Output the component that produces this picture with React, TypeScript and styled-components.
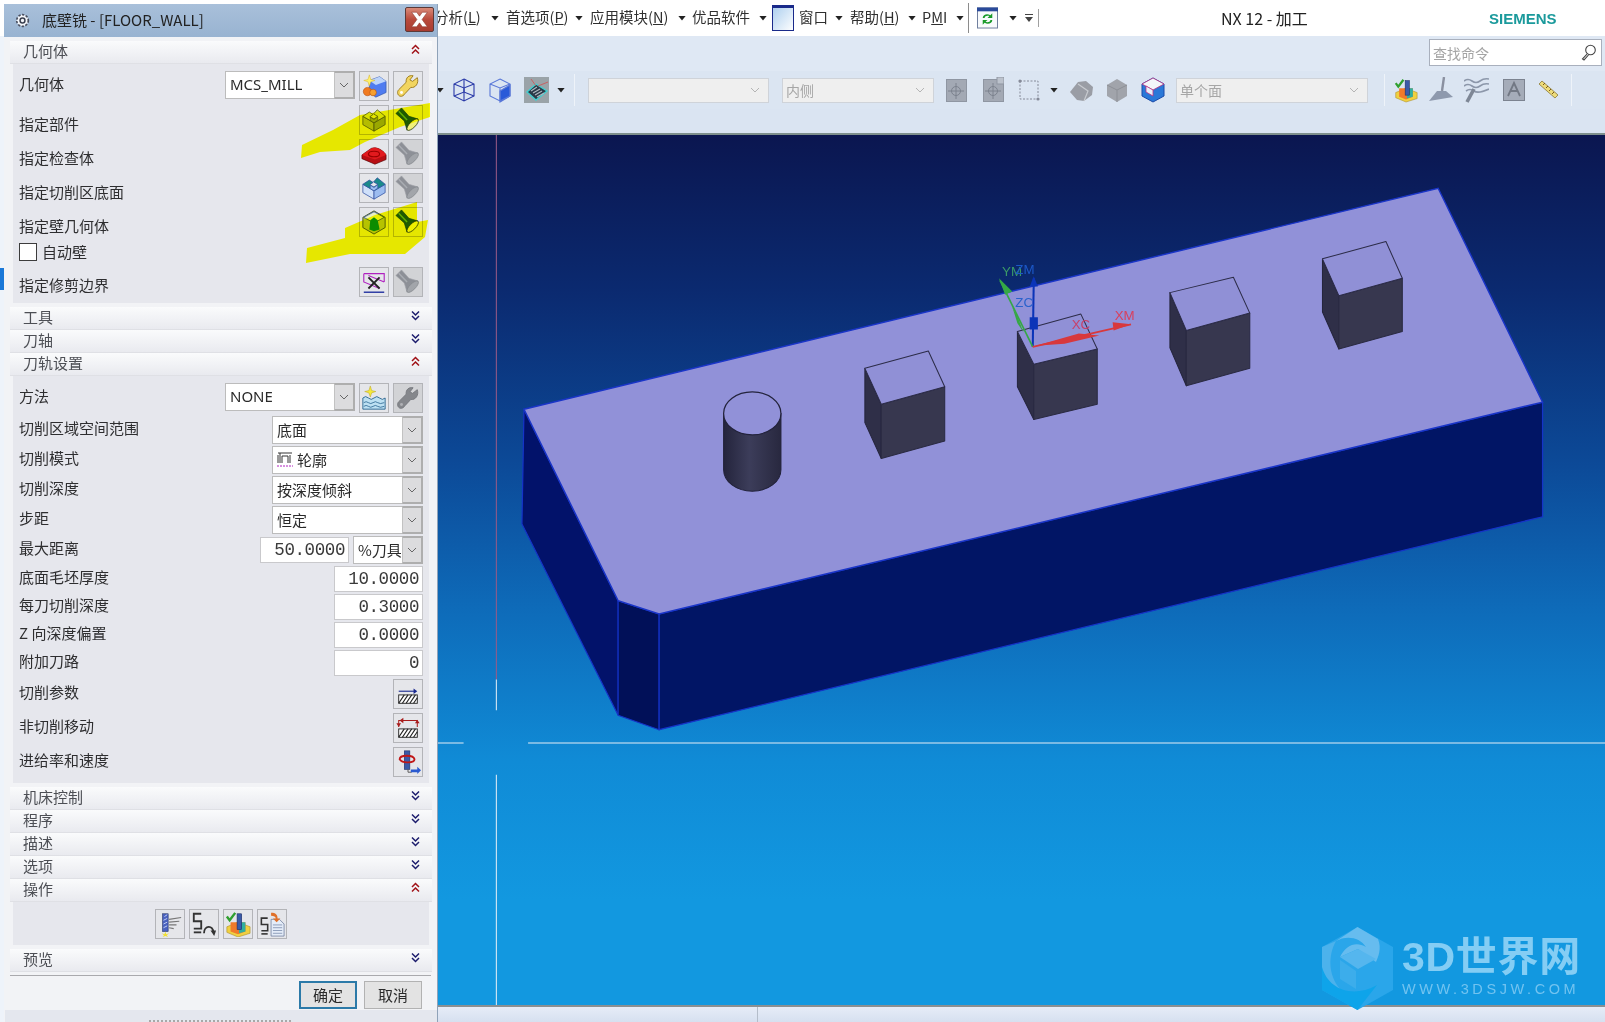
import React from 'react';
import styled, { createGlobalStyle } from 'styled-components';

const CJK = '"Noto Sans CJK SC", "Noto Sans", sans-serif';

const Global = createGlobalStyle`
  html, body { margin: 0; padding: 0; background: #fff; overflow: hidden; }
  body { font-family: ${CJK}; color: #333; }
  #root { width: 1605px; height: 1022px; }
`;

const Page = styled.div`
  position: relative; width: 1605px; height: 1022px; display: flex; flex-direction: column; overflow: hidden;
`;
const MenuBar = styled.div`
  height: 36px; background: #fff; display: flex; align-items: center; padding-left: 434px; flex: none;
`;
const MenuText = styled.span<{ $w: number; $ml: number }>`
  flex: none; width: ${p => p.$w}px; margin-left: ${p => p.$ml}px; font-size: 14.5px; line-height: 20px;
  white-space: nowrap; color: #2f2f2f; margin-top: -3px;
`;
const TitleText = styled(MenuText)`
  font-size: 16px; color: #222; margin-top: -1px;
`;
const Brand = styled(MenuText)`
  font-family: "Liberation Sans", sans-serif; font-weight: 700; font-size: 15px; color: #1b9a9c; margin-top: 1px;
`;
const Caret = styled.span<{ $ml: number }>`
  flex: none; width: 8px; height: 5px; margin-left: ${p => p.$ml}px; background: #222;
  clip-path: polygon(0 0, 100% 0, 50% 100%);
`;
const CaretBar = styled.span<{ $ml: number }>`
  flex: none; width: 8px; margin-left: ${p => p.$ml}px; display: flex; flex-direction: column; gap: 2px;
  &::before { content: ''; height: 1px; background: #444; }
  &::after { content: ''; height: 5px; background: #444; clip-path: polygon(0 0, 100% 0, 50% 100%); }
`;
const VSep = styled.span<{ $ml: number; $h: number; $c: string }>`
  flex: none; width: 1px; height: ${p => p.$h}px; margin-left: ${p => p.$ml}px; background: ${p => p.$c};
`;
const Slot = styled.span<{ $w: number; $ml: number }>`
  flex: none; width: ${p => p.$w}px; height: 26px; margin-left: ${p => p.$ml}px; display: flex; align-items: center;
  svg { width: 100%; height: 100%; display: block; }
`;
const Toolbar = styled.div`
  height: 97px; flex: none; background: #dde7f3; border-bottom: 2px solid #7e8f8c; display: flex; flex-direction: column;
`;
const SearchRow = styled.div`
  height: 35px; display: flex; justify-content: flex-end; padding: 3px 3px 0 0; box-sizing: border-box; background: #dfe8f4;
`;
const SearchBox = styled.div`
  width: 173px; height: 27px; box-sizing: border-box; border: 1px solid #a9b0bd; background: #fff; display: flex;
  align-items: center; justify-content: space-between; padding: 0 5px 0 3px; font-size: 14px; color: #a4a4a4;
`;
const ToolRow = styled.div`
  height: 38px; display: flex; align-items: center; padding-left: 436px; background: #dbe5f2;
`;
const ToolFill = styled.div`
  flex: 1; background: #dae4f2;
`;
const DisabledSelect = styled.div<{ $w: number; $ml: number }>`
  flex: none; width: ${p => p.$w}px; height: 25px; margin-left: ${p => p.$ml}px; box-sizing: border-box;
  border: 1px solid #cfd3d9; background: #efefef; display: flex; align-items: center; justify-content: space-between;
  padding: 0 8px 0 3px; font-size: 14px; color: #a6a6a6;
`;
const Graphic = styled.div`
  flex: 1; margin-left: 438px; position: relative; min-height: 0;
  background: linear-gradient(180deg, #0b1650 0%, #0b2a70 18%, #0c4a98 38%, #0e6cba 55%, #108bd6 72%, #1298e0 88%, #1298e0 100%);
  svg { display: block; width: 100%; height: 100%; }
`;
const StatusBar = styled.div`
  height: 17px; flex: none; background: linear-gradient(180deg, #e6ecf7, #d6e0f0); border-top: 2px solid #8a8f92; box-sizing: border-box;
  display: flex; padding-left: 757px;
  &::after { content: ''; width: 1px; background: #b4bdca; }
`;
const Rail = styled.div`
  position: absolute; left: 0; top: 36px; width: 438px; bottom: 0; background: #eef3fa;
`;
const RailMark = styled.span`
  position: absolute; left: 0; top: 232px; width: 4px; height: 22px; background: #1a78d8;
`;
const Watermark = styled.div`
  position: absolute; left: 884px; top: 792px; display: flex; align-items: flex-start; gap: 9px;
  svg { width: 71px; height: 83px; flex: none; }
`;
const MarkText = styled.div`
  display: flex; flex-direction: column; margin-top: 7px; font-family: "Liberation Sans", ${CJK}; color: #84cdf4;
`;
const MarkBig = styled.div`
  font-size: 41px; line-height: 47px; font-weight: 700; letter-spacing: .7px; white-space: nowrap;
`;
const MarkSmall = styled.div`
  font-size: 14.5px; line-height: 16px; letter-spacing: 3.6px; margin-top: 0; white-space: nowrap; color: #72c3f0;
`;

/* Dialog */
const Dialog = styled.div`
  position: absolute; left: 4px; top: 4px; width: 434px; height: 1018px; background: #f2f3f6; display: flex; flex-direction: column;
  border-right: 1px solid #8fa2b8; box-sizing: border-box;
`;
const TitleBar = styled.div`
  height: 33px; flex: none; background: linear-gradient(180deg, #a9c0da, #98b3d1); display: flex; align-items: center; padding: 0 3px 0 11px;
  font-size: 15px; color: #222;
`;
const TitleLabel = styled.span`
  margin-left: 12px; flex: 1; white-space: nowrap; margin-top: -2px;
`;
const Close = styled.button`
  width: 29px; height: 25px; padding: 0; border: 1px solid #5c3a38; border-radius: 2px; background: linear-gradient(180deg, #d98a78, #b94a3c 50%, #a83c30);
  display: flex; align-items: center; justify-content: center; margin-top: -2px;
`;
const Body = styled.div`
  flex: none; padding: 4px 5px 0 6px; display: flex; flex-direction: column;
`;
const SectionHead = styled.div`
  height: 23px; flex: none; box-sizing: border-box; display: flex; align-items: center; justify-content: space-between; padding: 0 12px 2px 13px;
  background: linear-gradient(180deg, #fafbfc, #e9eaef); border-bottom: 1px solid #dfe0e5; font-size: 15px; line-height: 20px; color: #4d4f55;
  svg { margin-bottom: 4px; }
`;
const Panel = styled.div`
  margin: 0 3px; background: #e6e7ed; padding: 7px 6px 6px; display: flex; flex-direction: column; flex: none;
`;
const Gap = styled.div<{ $h: number }>`
  height: ${p => p.$h}px; flex: none;
`;
const Row = styled.div<{ $h: number; $mt?: number }>`
  height: ${p => p.$h}px; margin-top: ${p => p.$mt ?? 0}px; display: flex; align-items: center; flex: none; gap: 4px;
`;
const Label = styled.span<{ $drop?: number }>`
  flex: 1; font-size: 15px; line-height: 20px; color: #2e2e30; white-space: nowrap; padding-top: ${p => p.$drop ?? 0}px; padding-bottom: 4px;
`;
const CheckLabel = styled.label`
  display: flex; align-items: center; gap: 5px; font-size: 15px; color: #2e2e30;
`;
const CheckText = styled.span`
  margin-top: -2px;
`;
const CheckBox = styled.span`
  width: 18px; height: 18px; box-sizing: border-box; border: 1px solid #3c3c3c; background: #fff; display: block;
`;
const IconBtn = styled.button<{ $off?: boolean }>`
  width: 30px; height: 30px; flex: none; padding: 0; box-sizing: border-box; border: 1px solid #b3b4b8; background: ${p => p.$off ? '#d2d3d6' : '#e5e6ea'};
  display: flex; align-items: center; justify-content: center; align-self: flex-start;
  svg { width: 26px; height: 26px; display: block; }
`;
const SelectBox = styled.div<{ $w: number; $h?: number }>`
  width: ${p => p.$w}px; height: ${p => p.$h ?? 28}px; flex: none; box-sizing: border-box; display: flex; background: #fff;
  border: 1px solid #bcbcbc; align-self: flex-start;
`;
const SelectValue = styled.span<{ $latin?: boolean }>`
  flex: 1; min-width: 0; display: flex; align-items: center; gap: 4px; padding-left: 4px; padding-bottom: 2px; font-size: 15px; color: #2a2a2a; white-space: nowrap;
  font-family: ${p => p.$latin ? '"Noto Sans", sans-serif' : CJK};
`;
const SelectArrow = styled.span`
  width: 21px; flex: none; background: #dcdcde; border: 2px solid #aeaeae; border-left: 1px solid #c2c2c2; box-sizing: border-box; margin: -1px -1px -1px 0;
  display: flex; align-items: center; justify-content: center;
`;
const NumField = styled.div<{ $w: number }>`
  width: ${p => p.$w}px; height: 26px; flex: none; box-sizing: border-box; border: 1px solid #c9c9cc; background: #fff; text-align: right;
  font-family: "Liberation Mono", monospace; font-size: 17.5px; line-height: 24px; letter-spacing: -.4px; padding-right: 3px; color: #3a3a3a; white-space: pre;
`;
const CenterRow = styled.div`
  display: flex; justify-content: center; gap: 4px;
`;
const Footer = styled.div`
  flex: none; margin: 3px 1px 0 0; border-top: 1px solid #a9a9ad; padding: 5px 9px 0 0; display: flex; justify-content: flex-end; gap: 7px; height: 35px; box-sizing: border-box;
`;
const DlgBtn = styled.button<{ $main?: boolean }>`
  width: 58px; height: 28px; box-sizing: border-box; padding: 0 0 2px; font-family: ${CJK}; font-size: 15px; color: #2a2a2a;
  background: #e3e3e3; border: ${p => p.$main ? '2px solid #2c7aa8' : '1px solid #b2b2b2'};
`;
const Grip = styled.div`
  flex: 1; background: #e4e7ee; display: flex; justify-content: center; align-items: flex-end; margin-left: 1px;
  &::after { content: ''; width: 144px; height: 2px; margin-bottom: 0; background: repeating-linear-gradient(90deg, #a8a8a8 0 2px, transparent 2px 4px); }
`;
const Marker = styled.svg`
  position: absolute; left: 0; top: 0; width: 438px; height: 300px; mix-blend-mode: multiply; pointer-events: none;
`;

/* Small icon parts */
const Chevs: React.FC<{ up?: boolean }> = ({ up }) => (
  <svg width="9" height="11" viewBox="0 0 9 11" fill="none" stroke={up ? '#a01218' : '#1c1c6c'} strokeWidth="1.5">
    {up ? <path d="M1 5 L4.5 1.5 L8 5 M1 9.5 L4.5 6 L8 9.5" /> : <path d="M1 1.5 L4.5 5 L8 1.5 M1 6 L4.5 9.5 L8 6" />}
  </svg>
);
const Vee = () => (
  <svg width="10" height="6" viewBox="0 0 10 6" fill="none" stroke="#666" strokeWidth="1"><path d="M1 1 L5 5 L9 1" /></svg>
);
const VeeLight = () => (
  <svg width="10" height="6" viewBox="0 0 10 6" fill="none" stroke="#b4b4b4" strokeWidth="1"><path d="M1 1 L5 5 L9 1" /></svg>
);
const Gear = () => (
  <svg width="15" height="15" viewBox="0 0 16 16"><circle cx="8" cy="8" r="6.2" fill="#f4f6fa" stroke="#4a5060" strokeWidth="1.8" strokeDasharray="2.4 1.6" /><circle cx="8" cy="8" r="2.6" fill="#f4f6fa" stroke="#3a4050" strokeWidth="1.6" /></svg>
);
const CloseX = () => (
  <svg width="19" height="17" viewBox="0 0 17 15"><path d="M1.5 1 L6 1 L8.5 4.5 L11 1 L15.5 1 L10.8 7.5 L15.5 14 L11 14 L8.5 10.5 L6 14 L1.5 14 L6.2 7.5 Z" fill="#fff" stroke="#8a3a30" strokeWidth=".5" /></svg>
);
const Flash: React.FC<{ off?: boolean }> = ({ off }) => (
  <svg viewBox="0 0 28 28">
    <path d="M1 7 L7 1 L15 10 L25 13 L13 25 L10 15 Z" fill={off ? '#8d9097' : '#1e5a14'} stroke={off ? '#a0a3a8' : '#123a0c'} strokeWidth=".7" />
    <path d="M4 4.5 L13 14" stroke={off ? '#a9acb2' : '#5fae3c'} strokeWidth="1.6" />
    <ellipse cx="19" cy="19" rx="8.2" ry="3.2" transform="rotate(-45 19 19)" fill={off ? '#a2a5aa' : '#f0f07a'} stroke={off ? '#85888e' : '#20300c'} strokeWidth=".8" />
  </svg>
);
const Wrench: React.FC<{ off?: boolean }> = ({ off }) => (
  <svg viewBox="0 0 28 28">
    <path d="M24 5 L19 9 L16 7.5 L19.5 3 C15 2 11.5 5 12 10 L4 18 C2 20 2.5 24 5.5 25 C8 25.5 9.5 24 11 22 L17 15.5 C22 16.5 26 11 24 5 Z" fill={off ? '#85878c' : '#f2d560'} stroke={off ? '#77797e' : '#9b7a1c'} strokeWidth="1" />
    <circle cx="7" cy="21" r="1.6" fill={off ? '#b0b1b5' : '#fff'} />
  </svg>
);
const SlotBlock: React.FC<{ top: string; left: string; right: string; edge: string }> = ({ top, left, right, edge }) => (
  <svg viewBox="0 0 28 28">
    <path d="M2 10 L14 17 L14 26 L2 19 Z" fill={left} stroke={edge} strokeWidth=".8" />
    <path d="M14 17 L26 10 L26 19 L14 26 Z" fill={right} stroke={edge} strokeWidth=".8" />
    <path d="M2 10 L9 5.5 L13 8 L9.5 10.5 L14 13 L18 10 L13.5 7.5 L17.5 3 L26 10 L14 17 Z" fill={top} stroke={edge} strokeWidth=".8" />
    <path d="M10 11 L14 13.5 L18 10.5 L18 14 L14 17 L10 14.5 Z" fill={right} stroke={edge} strokeWidth=".6" />
  </svg>
);
const NewGeom = () => (
  <svg viewBox="0 0 28 28">
    <path d="M9 8 L20 4 L27 9 L27 21 L16 26 L9 21 Z" fill="#4f7cf0" stroke="#3255a8" strokeWidth=".7" />
    <path d="M9 8 L20 4 L27 9 L16 13 Z" fill="#bcd4fa" />
    <path d="M9 2 L10.5 7 L15 8 L10.5 9.5 L9 14 L7.5 9.5 L3 8 L7.5 7 Z" fill="#fff26a" stroke="#d8b020" strokeWidth=".5" />
    <circle cx="7" cy="20" r="4.5" fill="#f07a20" stroke="#b04a10" strokeWidth=".6" /><circle cx="13" cy="21" r="3.6" fill="#f6a030" stroke="#b04a10" strokeWidth=".6" />
  </svg>
);
const RedBody = () => (
  <svg viewBox="0 0 28 28">
    <path d="M1 15 L11 8 C16 6 23 9 27 15 L27 20 L15 25 L1 19 Z" fill="#b80f14" stroke="#500" strokeWidth=".7" />
    <path d="M1 15 L11 8 C16 6 23 9 27 15 L15 20 Z" fill="#e21a1e" />
    <ellipse cx="14" cy="14" rx="6" ry="3" fill="none" stroke="#900" strokeWidth="1.2" />
  </svg>
);
const WallBlock = () => (
  <svg viewBox="0 0 28 28">
    <path d="M14 2 L26 9 L26 20 L14 27 L2 20 L2 9 Z" fill="#b6c23a" stroke="#2a3a10" strokeWidth=".8" />
    <path d="M14 3 L25 9 L14 15 L3 9 Z" fill="#e8efc0" stroke="#3050b0" strokeWidth=".8" />
    <path d="M9 22 L10 12 L14 9 L18 12 L20 22 L14 24 Z" fill="#0c8c28" />
  </svg>
);
const Trim = () => (
  <svg viewBox="0 0 28 28" fill="none">
    <path d="M3 5 L25 5 L25 14 M3 5 L3 14 L20 21 M25 14 L8 7" stroke="#b022c0" strokeWidth="1.2" />
    <path d="M3 25 L25 25" stroke="#2030a0" strokeWidth="1.5" />
    <path d="M8 9 L20 21 M20 9 L8 21" stroke="#222" strokeWidth="2" />
  </svg>
);
const NewMethod = () => (
  <svg viewBox="0 0 28 28">
    <path d="M10 1 L11.5 6 L16 7 L11.5 8.5 L10 13 L8.5 8.5 L4 7 L8.5 6 Z" fill="#f5ea3a" stroke="#b8a020" strokeWidth=".5" />
    <path d="M2 14 Q5 11 8 14 T14 14 T20 14 T26 14 L26 26 L2 26 Z" fill="#bde0f2" stroke="#1c5a88" strokeWidth=".9" />
    <path d="M3 19 Q5.5 17 8 19 T13 19 T18 19 T25 19 M3 23 Q5.5 21 8 23 T13 23 T18 23 T25 23" fill="none" stroke="#1c5a88" strokeWidth=".8" />
  </svg>
);
const Hatch: React.FC = () => (
  <g>
    <rect x="4" y="15" width="20" height="9" fill="#fff" stroke="#222" strokeWidth="1" />
    <path d="M4 24 L10 15 M8 24 L14 15 M12 24 L18 15 M16 24 L22 15 M20 24 L24 18" stroke="#222" strokeWidth="1.2" />
  </g>
);
const CutParam = () => (
  <svg viewBox="0 0 28 28"><Hatch /><path d="M4 11 L22 11" stroke="#1a2a90" strokeWidth="1.2" /><path d="M20 8 L24 11 L20 14 Z" fill="#1a2a90" /></svg>
);
const NonCut = () => (
  <svg viewBox="0 0 28 28"><Hatch /><path d="M4 13 L4 6 L24 6 L24 13" fill="none" stroke="#a81c1c" strokeWidth="1.1" /><path d="M1.5 9 L6.5 9 L4 13 Z M21.5 9 L26.5 9 L24 5 Z M9 3 L9 9 L5 6 Z" fill="#a81c1c" /></svg>
);
const Feeds = () => (
  <svg viewBox="0 0 28 28">
    <rect x="10" y="2" width="6" height="20" fill="#3a5aa8" stroke="#1a2a60" strokeWidth=".6" />
    <path d="M5 11 C5 6 20 6 21 11 C21 15 8 16 5 11 Z" fill="none" stroke="#c01818" strokeWidth="2" />
    <path d="M14 22 L14 25 L18 25" stroke="#555" fill="none" /><path d="M17 22 L24 22 L24 19 L28 23 L24 27 L24 25 L17 25 Z" fill="#2a5ad0" />
  </svg>
);
const Gen = () => (
  <svg viewBox="0 0 28 28">
    <rect x="6" y="3" width="6" height="19" fill="#4a62c0" stroke="#1a2a60" strokeWidth=".6" />
    <path d="M8 6 L11 4 M7 10 L11 8 M7 14 L11 12 M7 18 L11 16" stroke="#c8d4f4" strokeWidth="1" />
    <path d="M13 9 L26 7 M13 12 L24 11 M13 15 L21 15 M13 18 L18 19" stroke="#777" strokeWidth="1.2" />
    <path d="M9 22 L10 25 L13 24 L10.5 26 L12 28 L9 27 L6 28 L7.5 26 L5 24 L8 25 Z" fill="#f0e030" />
  </svg>
);
const Snake = () => <path d="M11 3 L3 3 L3 11 L11 11 L11 19 L3 19" fill="none" stroke="#333" strokeWidth="2" />;
const Replay = () => (
  <svg viewBox="0 0 28 28"><Snake /><path d="M3 23 L11 23" stroke="#333" strokeWidth="2" /><path d="M14 24 C14 15 24 15 24 23" fill="none" stroke="#333" strokeWidth="2" /><path d="M21 21 L27 21 L25 27 Z" fill="#333" /></svg>
);
const Verify = () => (
  <svg viewBox="0 0 28 28">
    <path d="M2 17 L14 12 L27 17 L27 24 L14 28 L2 23 Z" fill="#f0d040" stroke="#a88a20" strokeWidth=".6" />
    <path d="M6 12 L22 12 L22 22 L14 25 L6 22 Z" fill="#f07a2a" /><path d="M15 12 L22 12 L22 22 L15 24 Z" fill="#30b0a0" />
    <rect x="13" y="3" width="5" height="17" fill="#3a5aa8" stroke="#1a2a60" strokeWidth=".6" />
    <path d="M2 6 L5 10 L11 2" fill="none" stroke="#30a030" strokeWidth="2.6" />
  </svg>
);
const Listing = () => (
  <svg viewBox="0 0 28 28"><g transform="scale(.85) translate(0 6)"><Snake /><path d="M3 23 L11 23" stroke="#333" strokeWidth="2" /></g>
    <path d="M13 9 L22 9 L27 14 L27 27 L13 27 Z" fill="#e4ecf8" stroke="#6a7a9a" strokeWidth=".8" />
    <path d="M15 15 L25 15 M15 18 L25 18 M15 21 L25 21 M15 24 L25 24" stroke="#8a9ab8" strokeWidth="1" />
    <path d="M13 2 C18 2 20 4 20 8 L23 8 L19 12 L15 8 L18 8 C18 6 16 5 13 5 Z" fill="#e0702a" />
  </svg>
);
const ModeIcon = () => (
  <svg width="16" height="16" viewBox="0 0 16 16" fill="none">
    <path d="M1 2 L15 2 M3 2 L3 12 M1 12 L1 4 M5 12 L5 5 L11 5 L11 12 M13 12 L13 4" stroke="#333" strokeWidth="1" />
    <path d="M0 15 L16 15" stroke="#b022c0" strokeWidth="1" strokeDasharray="2 1" />
  </svg>
);
const WinIcon = () => (
  <svg viewBox="0 0 22 26" preserveAspectRatio="none">
    <defs><linearGradient id="wg" x1="0" y1="0" x2="1" y2="1"><stop offset="0" stopColor="#a9cdee" /><stop offset="1" stopColor="#fff" /></linearGradient></defs>
    <rect x=".5" y=".5" width="21" height="25" fill="url(#wg)" stroke="#1a2a8a" /><rect x="0" y="0" width="22" height="3" fill="#1a2a8a" />
  </svg>
);
const Refresh = () => (
  <svg viewBox="0 0 22 22">
    <rect x=".5" y=".5" width="21" height="21" fill="#f8fafc" stroke="#6a7a9a" /><rect x="0" y="0" width="22" height="4" fill="#2a4a9a" />
    <path d="M6 11 C6 7 11 6 14 8 L16 6 L16 11 L11 11 L13 9 C11 8 8 9 8 11 Z M16 13 C16 17 11 18 8 16 L6 18 L6 13 L11 13 L9 15 C11 16 14 15 14 13 Z" fill="#1a9a2a" />
  </svg>
);
const Wire: React.FC<{ solid?: boolean }> = ({ solid }) => (
  <svg viewBox="0 0 24 26" fill="none" stroke={solid ? '#5a78d8' : '#2a3aa8'} strokeWidth="1.1">
    {solid && <path d="M12 14 L22 8 L22 19 L12 25 Z" fill="#2a5ad8" />}
    <path d="M12 2 L22 7 L22 19 L12 24 L2 19 L2 7 Z M2 7 L12 11 L22 7 M12 11 L12 24" />
    {!solid && <path d="M12 2 L12 15 M2 19 L12 15 L22 19" />}
  </svg>
);
const Chip = () => (
  <svg viewBox="0 0 25 26">
    <rect x="0" y="0" width="25" height="26" fill="#9aa3a8" />
    <path d="M12 7 L23 14 L12 23 L3 15 Z" fill="#2a3a48" stroke="#42d0d0" strokeWidth="1.4" />
    <path d="M7 14 L13 10 M9 16 L16 12 M11 18 L18 14 M13 20 L20 16" stroke="#aeb8c0" strokeWidth="1.2" />
    <path d="M7 2 L12 9 M14 9 L24 5" stroke="#d05050" strokeWidth=".8" />
  </svg>
);
const Target: React.FC<{ badge?: boolean }> = ({ badge }) => (
  <svg viewBox="0 0 21 26">
    <rect x=".5" y="2.5" width="20" height="22" fill="#a3a9b4" stroke="#8f96a2" />
    <circle cx="10" cy="14" r="4.5" fill="none" stroke="#7c828e" /><path d="M10 6 L10 22 M2 14 L18 14" stroke="#7c828e" />
    {badge && <rect x="14" y="0" width="7" height="7" fill="#bcc2cc" stroke="#8f96a2" />}
  </svg>
);
const DashBox = () => (
  <svg viewBox="0 0 22 26"><rect x="2" y="4" width="18" height="18" fill="none" stroke="#858a98" strokeDasharray="2 1.5" /><circle cx="2" cy="4" r="1.6" fill="#858a98" /><circle cx="20" cy="22" r="1.6" fill="#858a98" /></svg>
);
const GreyShape = () => (
  <svg viewBox="0 0 24 26"><path d="M1 15 L9 5 L17 4 L24 10 L23 18 L15 24 L8 23 Z" fill="#9a9da5" /><path d="M9 7 L19 14 L15 24" fill="none" stroke="#c8cbd0" strokeWidth="1.2" /></svg>
);
const GreyCube = () => (
  <svg viewBox="0 0 22 26"><path d="M11 2 L21 8 L21 19 L11 25 L1 19 L1 8 Z" fill="#a1a4ab" /><path d="M1 8 L11 13 L21 8 M11 13 L11 25" stroke="#8d9097" fill="none" /></svg>
);
const ColorCube = () => (
  <svg viewBox="0 0 24 26">
    <path d="M12 1 L23 7 L23 19 L12 25 L1 19 L1 7 Z" fill="#2a78d8" stroke="#1a4aa8" />
    <path d="M12 1 L23 7 L12 13 L1 7 Z" fill="#f4f6fa" stroke="#b03080" strokeWidth=".8" />
    <path d="M5 9 L12 13 L12 19 L5 15 Z" fill="#e8f0fa" stroke="#c03080" strokeWidth=".8" />
  </svg>
);
const Broom = () => (
  <svg viewBox="0 0 24 26"><path d="M15 0 L13 14" stroke="#8a90a0" strokeWidth="2.4" /><path d="M8 14 L17 14 L24 20 L0 24 Z" fill="#8e99ad" /></svg>
);
const Waves = () => (
  <svg viewBox="0 0 25 26" fill="none" stroke="#8c97aa" strokeWidth="1.6"><path d="M0 4 Q4 1 8 4 T16 4 T25 2 M0 9 Q4 6 8 9 T16 9 T25 7 M2 14 Q6 11 10 14 T25 12" /><path d="M10 12 L3 25" strokeWidth="3.6" stroke="#7e8796" /></svg>
);
const LetterBox = () => (
  <svg viewBox="0 0 22 26">
    <rect x=".5" y="2.5" width="21" height="21" fill="#a5acb9" stroke="#7c8390" />
    <path d="M5 19 L11 6 L17 19 M7.5 14 L14.5 14" fill="none" stroke="#727884" strokeWidth="1.8" />
  </svg>
);
const Ruler = () => (
  <svg viewBox="0 0 21 26"><path d="M1 7 L4 4 L20 18 L17 21 Z" fill="#eedc7a" stroke="#8a7a38" strokeWidth=".8" /><path d="M5 8 L7 6 M8 11 L10 9 M11 14 L13 12 M14 17 L16 15" stroke="#7a5a18" strokeWidth="1" /></svg>
);
const Lens = () => (
  <svg width="15" height="17" viewBox="0 0 15 17" fill="none" stroke="#444" strokeWidth="1.1"><circle cx="9.5" cy="6" r="4.8" /><path d="M6 10 L1.5 15 L3 16 L7.5 11" fill="#ddd" /></svg>
);

/* Viewport drawing, in the coordinates of the picture */
const Box: React.FC<{ p: number[] }> = ({ p }) => {
  const [ax, ay, bx, by, cx, cy, dx, dy, h] = p;
  return (
    <g strokeWidth="1" strokeLinejoin="round">
      <polygon points={`${ax},${ay} ${dx},${dy} ${dx},${dy + h} ${ax},${ay + h}`} fill="#2f2f48" stroke="#24243c" />
      <polygon points={`${dx},${dy} ${cx},${cy} ${cx},${cy + h} ${dx},${dy + h}`} fill="#37374f" stroke="#2a2a42" />
      <polygon points={`${ax},${ay} ${bx},${by} ${cx},${cy} ${dx},${dy}`} fill="#9090d6" stroke="#2c2c48" />
    </g>
  );
};

const Scene = () => (
  <svg viewBox="428 132 1140 850" preserveAspectRatio="none">
    <defs>
      <linearGradient id="cyl" x1="0" y1="0" x2="1" y2="0">
        <stop offset="0" stopColor="#24243c" /><stop offset=".45" stopColor="#3c3d5a" /><stop offset="1" stopColor="#28283f" />
      </linearGradient>
    </defs>
    <polygon points="512,400 604,587 604,699 510,512" fill="#02126a" stroke="#1533c8" strokeWidth="1.2" />
    <polygon points="604,587 644,600 644,713 604,699" fill="#011058" stroke="#1533c8" strokeWidth="1" />
    <polygon points="644,600 1507,393 1507,505 644,713" fill="#011565" stroke="#1533c8" strokeWidth="1.2" />
    <polygon points="512,400 1405,184 1507,393 644,600 604,587" fill="#9191d8" stroke="#1a35c8" strokeWidth="1.4" />
    <path d="M707 404 L707 459 A28 21 0 0 0 763 459 L763 404 Z" fill="url(#cyl)" stroke="#22223a" />
    <ellipse cx="735" cy="404" rx="28" ry="21" fill="#9191d8" stroke="#23233c" strokeWidth="1.2" />
    <Box p={[845, 360, 907, 343, 923, 378, 861, 395, 53]} />
    <Box p={[994, 324, 1056, 307, 1072, 341, 1010, 356, 54]} />
    <Box p={[1143, 286, 1205, 271, 1221, 306, 1159, 323, 54]} />
    <Box p={[1292, 253, 1354, 236, 1370, 272, 1308, 289, 52]} />
    <path d="M1009 339 L1010 272" stroke="#0b34b8" strokeWidth="2" />
    <path d="M1010 270 L1006 280 L1014 280 Z M1006 310 L1014 310 L1014 322 L1006 322 Z" fill="#0b34b8" />
    <path d="M1009 339 L977 274" stroke="#35a845" strokeWidth="1.6" />
    <path d="M976 272 L989 285 L982 288 Z M989 300 L994 309 L1000 325 L994 316 Z" fill="#35a845" />
    <path d="M1009 339 L1105 317" stroke="#d8383c" strokeWidth="1.6" />
    <path d="M1105 317 L1087 315 L1088 323 Z M1012 338 L1054 326 L1074 328 L1040 336 Z" fill="#d8383c" />
    <g fontFamily='"Liberation Sans", sans-serif' fontSize="13">
      <text x="979" y="270" fill="#3a9a68">YM</text>
      <text x="992" y="268" fill="#1c58c8">ZM</text>
      <text x="992" y="300" fill="#2a62cc">ZC</text>
      <text x="1047" y="322" fill="#c8406a">XC</text>
      <text x="1089" y="313" fill="#d8405e">XM</text>
    </g>
    <path d="M485 132 L485 664" stroke="#9a5a88" strokeWidth="1" />
    <path d="M485 664 L485 694 M485 757 L485 982 M428 726 L453 726 M516 726 L1568 726" stroke="#e4eef6" strokeWidth="1" />
  </svg>
);

const MarkLogo = () => (
  <svg viewBox="0 0 71 83">
    <polygon points="35.5,0 71,20 71,63 35.5,83 0,63 0,20" fill="#2aa6ea" />
    <path d="M35.5 0 L56 12 C60 22 56 30 54 35 L36 22 L18 30 C24 18 34 14 44 20 C38 10 24 8 14 14 Z" fill="#66bcef" />
    <path d="M14 14 C6 28 6 48 18 62 L0 63 L0 20 Z" fill="#4cb2ec" />
    <path d="M18 30 L36 22 L54 32 L36 42 Z" fill="#55b6ee" />
    <path d="M18 33 L34 44 L34 62 L18 52 Z" fill="#3cadeb" />
    <path d="M0 40 C6 62 30 72 55 58 L35.5 83 L0 63 Z" fill="#0ea4ea" />
  </svg>
);

const Section: React.FC<{ title: string; up?: boolean }> = ({ title, up }) => (
  <SectionHead><span>{title}</span><Chevs up={up} /></SectionHead>
);
const Sel: React.FC<{ w: number; value: string; latin?: boolean; icon?: React.ReactNode }> = ({ w, value, latin, icon }) => (
  <SelectBox $w={w}><SelectValue $latin={latin}>{icon}{value}</SelectValue><SelectArrow><Vee /></SelectArrow></SelectBox>
);

type M = { k: 't'; s: React.ReactNode; w: number; ml: number } | { k: 'c' | 'b'; ml: number } | { k: 'i'; n: React.ReactNode; w: number; ml: number } | { k: 's'; ml: number; h: number; c: string };
const menu: M[] = [
  { k: 't', s: <>分析(<u>L</u>)</>, w: 44, ml: 0 }, { k: 'c', ml: 13 },
  { k: 't', s: <>首选项(<u>P</u>)</>, w: 63, ml: 7 }, { k: 'c', ml: 6 },
  { k: 't', s: <>应用模块(<u>N</u>)</>, w: 81, ml: 7 }, { k: 'c', ml: 7 },
  { k: 't', s: '优品软件', w: 60, ml: 6 }, { k: 'c', ml: 7 },
  { k: 'i', n: <WinIcon />, w: 22, ml: 5 },
  { k: 't', s: '窗口', w: 30, ml: 5 }, { k: 'c', ml: 6 },
  { k: 't', s: <>帮助(<u>H</u>)</>, w: 52, ml: 7 }, { k: 'c', ml: 6 },
  { k: 't', s: <>P<u>M</u>I</>, w: 28, ml: 6 }, { k: 'c', ml: 6 },
  { k: 's', ml: 4, h: 30, c: '#8c8c8c' },
  { k: 'i', n: <Refresh />, w: 21, ml: 8 }, { k: 'c', ml: 11 }, { k: 'b', ml: 8 },
  { k: 's', ml: 5, h: 18, c: '#a0a0a0' },
];
const renderMenu = (m: M, i: number) => {
  if (m.k === 't') return <MenuText key={i} $w={m.w} $ml={m.ml}>{m.s}</MenuText>;
  if (m.k === 'c') return <Caret key={i} $ml={m.ml} />;
  if (m.k === 'b') return <CaretBar key={i} $ml={m.ml} />;
  if (m.k === 'i') return <Slot key={i} $w={m.w} $ml={m.ml}>{m.n}</Slot>;
  return <VSep key={i} $ml={m.ml} $h={m.h} $c={m.c} />;
};

export default function App() {
  return (
    <Page>
      <Global />
      <MenuBar>
        {menu.map(renderMenu)}
        <TitleText $w={88} $ml={182}>NX 12 - 加工</TitleText>
        <Brand $w={69} $ml={180}>SIEMENS</Brand>
      </MenuBar>
      <Toolbar>
        <SearchRow><SearchBox>查找命令<Lens /></SearchBox></SearchRow>
        <ToolRow>
          <Caret $ml={0} />
          <Slot $w={24} $ml={8}><Wire /></Slot>
          <Slot $w={24} $ml={12}><Wire solid /></Slot>
          <Slot $w={25} $ml={12}><Chip /></Slot>
          <Caret $ml={8} />
          <VSep $ml={9} $h={32} $c="#eef3f9" />
          <DisabledSelect $w={181} $ml={13}><span /><VeeLight /></DisabledSelect>
          <DisabledSelect $w={152} $ml={13}>内侧<VeeLight /></DisabledSelect>
          <Slot $w={21} $ml={12}><Target /></Slot>
          <Slot $w={21} $ml={16}><Target badge /></Slot>
          <Slot $w={22} $ml={14}><DashBox /></Slot>
          <Caret $ml={10} />
          <Slot $w={24} $ml={11}><GreyShape /></Slot>
          <Slot $w={22} $ml={13}><GreyCube /></Slot>
          <Slot $w={24} $ml={13}><ColorCube /></Slot>
          <DisabledSelect $w={192} $ml={11}>单个面<VeeLight /></DisabledSelect>
          <VSep $ml={16} $h={32} $c="#eef3f9" />
          <Slot $w={24} $ml={9}><Verify /></Slot>
          <Slot $w={24} $ml={11}><Broom /></Slot>
          <Slot $w={25} $ml={11}><Waves /></Slot>
          <Slot $w={22} $ml={14}><LetterBox /></Slot>
          <Slot $w={21} $ml={13}><Ruler /></Slot>
          <VSep $ml={12} $h={32} $c="#eef3f9" />
        </ToolRow>
        <ToolFill />
      </Toolbar>
      <Graphic>
        <Scene />
        <Watermark>
          <MarkLogo />
          <MarkText>
            <MarkBig>3D世界网</MarkBig>
            <MarkSmall>WWW.3DSJW.COM</MarkSmall>
          </MarkText>
        </Watermark>
      </Graphic>
      <StatusBar />
      <Rail><RailMark /></Rail>
      <Dialog>
        <TitleBar>
          <Gear />
          <TitleLabel>底壁铣 - [FLOOR_WALL]</TitleLabel>
          <Close aria-label="关闭"><CloseX /></Close>
        </TitleBar>
        <Body>
          <Section title="几何体" up />
          <Panel>
            <Row $h={30}><Label>几何体</Label><Sel w={130} value="MCS_MILL" latin /><IconBtn><NewGeom /></IconBtn><IconBtn><Wrench /></IconBtn></Row>
            <Row $h={30} $mt={4}><Label $drop={12}>指定部件</Label><IconBtn><SlotBlock top="#d8e038" left="#b4bc20" right="#9aa818" edge="#4a5208" /></IconBtn><IconBtn><Flash /></IconBtn></Row>
            <Row $h={30} $mt={4}><Label $drop={12}>指定检查体</Label><IconBtn><RedBody /></IconBtn><IconBtn $off><Flash off /></IconBtn></Row>
            <Row $h={30} $mt={4}><Label $drop={12}>指定切削区底面</Label><IconBtn><SlotBlock top="#1a8a8a" left="#cfe0fa" right="#9cbcf0" edge="#3050a0" /></IconBtn><IconBtn $off><Flash off /></IconBtn></Row>
            <Row $h={30} $mt={4}><Label $drop={12}>指定壁几何体</Label><IconBtn><WallBlock /></IconBtn><IconBtn><Flash /></IconBtn></Row>
            <Row $h={18} $mt={6}><CheckLabel><CheckBox /><CheckText>自动壁</CheckText></CheckLabel></Row>
            <Row $h={30} $mt={6}><Label $drop={10}>指定修剪边界</Label><IconBtn><Trim /></IconBtn><IconBtn $off><Flash off /></IconBtn></Row>
          </Panel>
          <Gap $h={4} />
          <Section title="工具" />
          <Section title="刀轴" />
          <Section title="刀轨设置" up />
          <Panel>
            <Row $h={30}><Label>方法</Label><Sel w={130} value="NONE" latin /><IconBtn><NewMethod /></IconBtn><IconBtn $off><Wrench off /></IconBtn></Row>
            <Row $h={28} $mt={3}><Label>切削区域空间范围</Label><Sel w={151} value="底面" /></Row>
            <Row $h={28} $mt={2}><Label>切削模式</Label><Sel w={151} value="轮廓" icon={<ModeIcon />} /></Row>
            <Row $h={28} $mt={2}><Label>切削深度</Label><Sel w={151} value="按深度倾斜" /></Row>
            <Row $h={28} $mt={2}><Label>步距</Label><Sel w={151} value="恒定" /></Row>
            <Row $h={28} $mt={2}><Label>最大距离</Label><NumField $w={89}>50.0000</NumField><Sel w={70} value="%刀具" /></Row>
            <Row $h={26} $mt={2}><Label>底面毛坯厚度</Label><NumField $w={89}>10.0000</NumField></Row>
            <Row $h={26} $mt={2}><Label>每刀切削深度</Label><NumField $w={89}>0.3000</NumField></Row>
            <Row $h={26} $mt={2}><Label>Z 向深度偏置</Label><NumField $w={89}>0.0000</NumField></Row>
            <Row $h={26} $mt={2}><Label>附加刀路</Label><NumField $w={89}>0</NumField></Row>
            <Row $h={30} $mt={3}><Label>切削参数</Label><IconBtn><CutParam /></IconBtn></Row>
            <Row $h={30} $mt={4}><Label>非切削移动</Label><IconBtn><NonCut /></IconBtn></Row>
            <Row $h={30} $mt={4}><Label>进给率和速度</Label><IconBtn><Feeds /></IconBtn></Row>
          </Panel>
          <Gap $h={4} />
          <Section title="机床控制" />
          <Section title="程序" />
          <Section title="描述" />
          <Section title="选项" />
          <Section title="操作" up />
          <Panel>
            <CenterRow>
              <IconBtn><Gen /></IconBtn>
              <IconBtn><Replay /></IconBtn>
              <IconBtn><Verify /></IconBtn>
              <IconBtn><Listing /></IconBtn>
            </CenterRow>
          </Panel>
          <Gap $h={4} />
          <Section title="预览" />
          <Footer>
            <DlgBtn $main>确定</DlgBtn>
            <DlgBtn>取消</DlgBtn>
          </Footer>
        </Body>
        <Grip />
      </Dialog>
      <Marker viewBox="0 0 438 300">
        <polygon points="301,158 302,145 333,130 360,115 430,103 430,117 400,127 365,142 350,150 320,152" fill="#ffff00" />
        <polygon points="306,263 307,248 345,238 345,228 375,215 417,202 417,222 428,220 425,237 405,254 350,254" fill="#ffff00" />
      </Marker>
    </Page>
  );
}
